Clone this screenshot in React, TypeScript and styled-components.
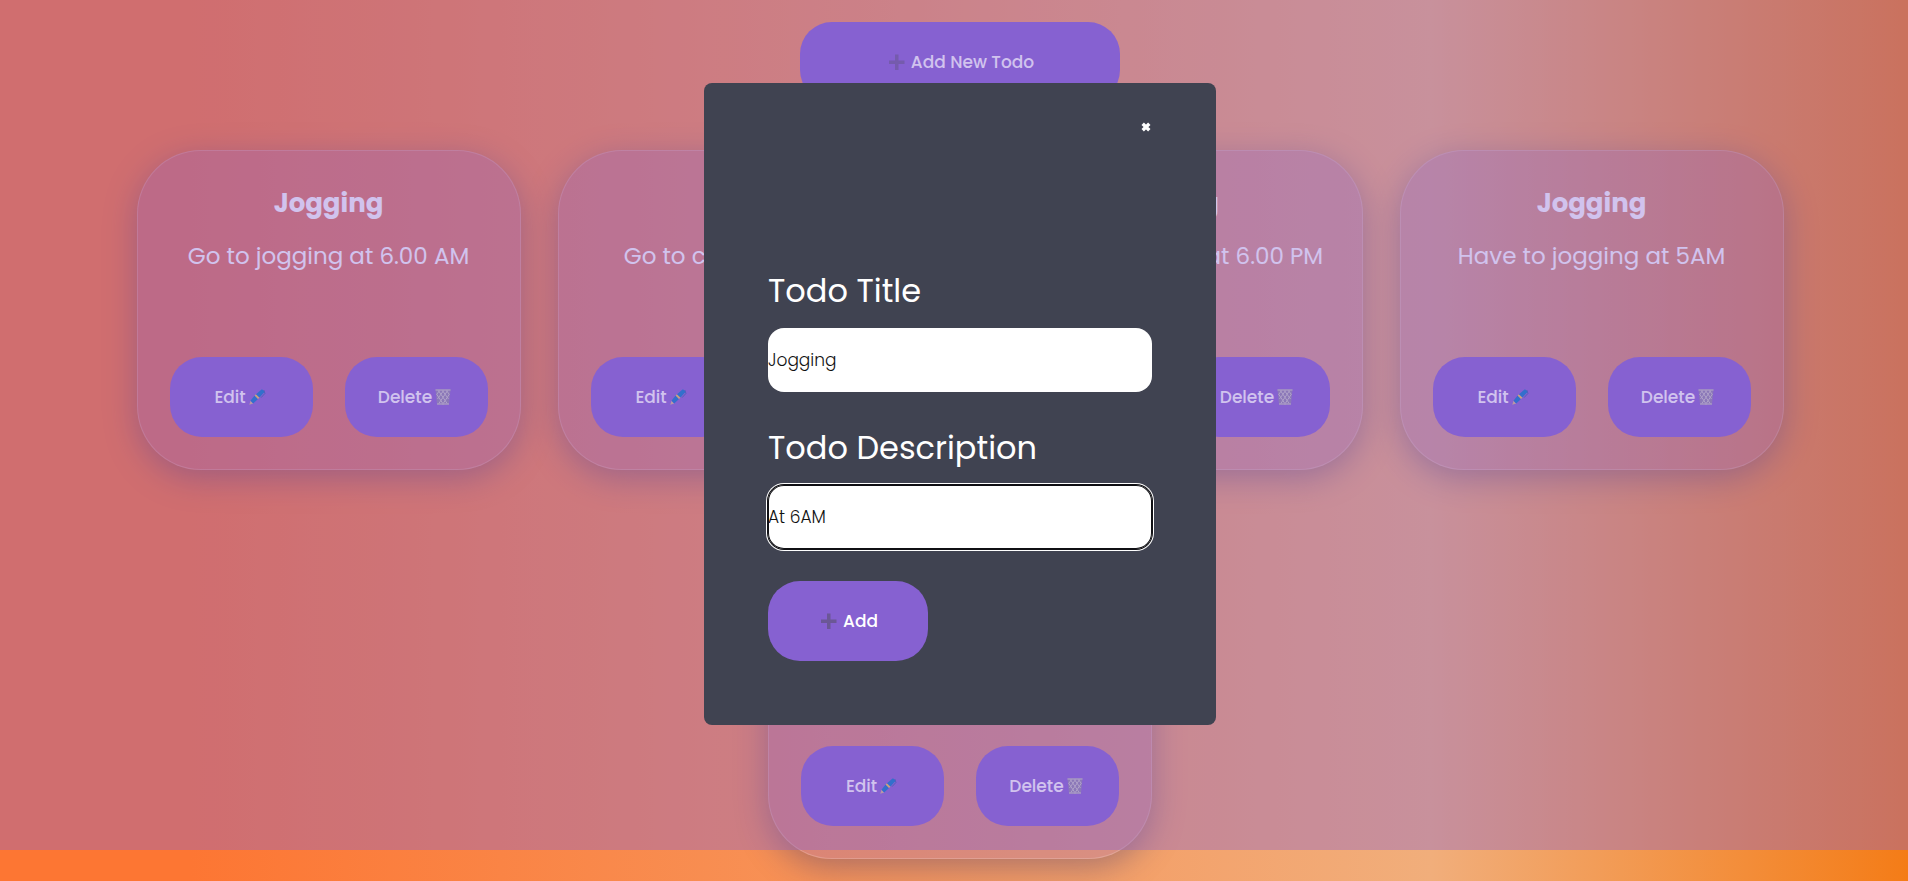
import React, { useState } from "react";
import styled, { createGlobalStyle } from "styled-components";

const GlobalStyle = createGlobalStyle`
  *, *::before, *::after { box-sizing: border-box; margin: 0; padding: 0; }
  body {
    min-height: 100vh;
    overflow: hidden;
    font-family: Poppins, "Open Sans", "Noto Sans", sans-serif;
    background: linear-gradient(90deg, #fd7633 0%, #fd7633 10%, #f1ae7b 75%, #f47c17 100%);
  }
  button, input { font: inherit; border: 0; }
`;

const Page = styled.main`
  height: 100vh;
  padding: 22px 0 0 12px;
  overflow: hidden;
  display: flex;
  flex-direction: column;
  align-items: center;
  gap: 48px;
`;

const Button = styled.button<{ $width: string }>`
  width: ${(p) => p.$width};
  height: 80px;
  flex-shrink: 0;
  display: inline-flex;
  align-items: center;
  justify-content: center;
  gap: 3px;
  border-radius: 32px;
  background: #8661d1;
  color: #fff;
  font-size: 17px;
  line-height: 24px;
  font-weight: 500;
  cursor: pointer;
`;

const Cards = styled.ul`
  list-style: none;
  display: flex;
  flex-wrap: wrap;
  justify-content: center;
  gap: 69px 37px;
`;

const Card = styled.li`
  width: 384px;
  height: 320px;
  padding: 32px;
  display: flex;
  flex-direction: column;
  align-items: center;
  border: 1px solid rgba(255, 255, 255, 0.18);
  border-radius: 64px;
  background: rgba(134, 97, 209, 0.25);
  box-shadow: 0 8px 32px 0 rgba(31, 38, 120, 0.35);
  color: #fff;
`;

const CardTitle = styled.h2`
  font-size: 26px;
  line-height: 40px;
  font-weight: 700;
`;

const CardText = styled.p`
  margin-top: 16px;
  font-size: 23px;
  line-height: 34px;
`;

const CardActions = styled.div`
  width: 100%;
  margin-top: auto;
  display: grid;
  grid-template-columns: 1fr 1fr;
  gap: 32px;
`;

const Overlay = styled.div`
  position: fixed;
  inset: 0 0 31px 0;
  padding: 83px 0 0 12px;
  display: flex;
  justify-content: center;
  align-items: flex-start;
  background: rgba(134, 97, 209, 0.38);
`;

const Dialog = styled.form`
  width: 512px;
  flex-shrink: 0;
  padding: 32px 64px 64px;
  display: flex;
  flex-direction: column;
  align-items: flex-start;
  gap: 32px;
  border-radius: 8px;
  background: #404351;
  color: #fff;
`;

const Close = styled.button`
  width: 12px;
  height: 24px;
  margin-bottom: 96px;
  align-self: flex-end;
  display: flex;
  align-items: center;
  justify-content: center;
  background: none;
  color: #fff;
  cursor: pointer;
`;

const Field = styled.label`
  width: 100%;
  display: flex;
  flex-direction: column;
  gap: 13px;
  font-size: 32px;
  line-height: 48px;
`;

const TextInput = styled.input<{ $active?: boolean }>`
  width: 100%;
  height: 64px;
  border-radius: 16px;
  background: #fff;
  color: #111;
  font-size: 17px;
  line-height: 24px;
  font-weight: 300;
  outline: none;
  box-shadow: ${(p) =>
    p.$active
      ? "inset 0 0 0 1px #101014, 0 0 0 1px #101014, 0 0 0 2px #fff"
      : "none"};
`;

const PlusIcon = () => (
  <svg width="22" height="16" viewBox="0 0 22 16" aria-hidden="true">
    <path d="M9 0.500h3.500v6h6v3.500h-6v6h-3.500v-6h-6v-3.500h6z" fill="#6b5796" />
  </svg>
);

const PenIcon = () => (
  <svg width="19" height="16" viewBox="0 0 19 16" aria-hidden="true">
    <path d="M0.300 15.700L1.500 11.800L4.200 14.400z" fill="#d9b98a" />
    <path d="M1.500 11.800L5.600 6.600L9 9.900L4.200 14.400z" fill="#0078c8" />
    <path d="M5.600 6.600L7 5.200L10.500 8.500L9 9.900z" fill="#f2c94c" />
    <path d="M7 5.200L12.200 0.700C13.500 -0.100 16 1.900 15 3.500L10.500 8.500z" fill="#0078c8" />
    <path d="M15 1.200L15.900 4.500L12 8.700" fill="none" stroke="#1c5fa0" strokeWidth="0.800" />
  </svg>
);

const BinIcon = () => (
  <svg width="19" height="16" viewBox="0 0 19 16" aria-hidden="true">
    <path d="M0.500 0.500h15l-1.500 15h-12z" fill="#8f86a8" />
    <path
      d="M3 1l9.500 14M7 1l6.500 9M1.500 5l7 10.500M13 1L3.500 15M9 1l-6.500 9M14.500 5l-7 10.500M11 1l3 4M5 1l-3 4"
      fill="none"
      stroke="#c9c9c4"
      strokeWidth="1"
    />
    <path d="M0.500 1h15M2 15h12" stroke="#b9b7ba" strokeWidth="1.500" />
  </svg>
);

const CloseIcon = () => (
  <svg width="10" height="10" viewBox="0 0 10 10" aria-hidden="true">
    <path d="M1.700 1.700L8.300 8.300M8.300 1.700L1.700 8.300" stroke="#fff" strokeWidth="3.400" />
  </svg>
);

const todos = [
  { id: 1, title: "Jogging", text: "Go to jogging at 6.00 AM" },
  { id: 2, title: "Class", text: "Go to college at 10 AM" },
  { id: 3, title: "Coding", text: "Have to jogging at 6.00 PM" },
  { id: 4, title: "Jogging", text: "Have to jogging at 5AM" },
  { id: 5, title: "Jogging", text: "At 6AM" },
];

export default function App() {
  const [title, setTitle] = useState("Jogging");
  const [description, setDescription] = useState("At 6AM");

  return (
    <>
      <GlobalStyle />
      <Page>
        <Button type="button" $width="320px">
          <PlusIcon />
          Add New Todo
        </Button>
        <Cards>
          {todos.map((todo) => (
            <Card key={todo.id}>
              <CardTitle>{todo.title}</CardTitle>
              <CardText>{todo.text}</CardText>
              <CardActions>
                <Button type="button" $width="100%">
                  Edit
                  <PenIcon />
                </Button>
                <Button type="button" $width="100%">
                  Delete
                  <BinIcon />
                </Button>
              </CardActions>
            </Card>
          ))}
        </Cards>
      </Page>
      <Overlay>
        <Dialog role="dialog" aria-label="Add todo" onSubmit={(e) => e.preventDefault()}>
          <Close type="button" aria-label="Close">
            <CloseIcon />
          </Close>
          <Field>
            Todo Title
            <TextInput value={title} onChange={(e) => setTitle(e.target.value)} />
          </Field>
          <Field>
            Todo Description
            <TextInput
              $active
              value={description}
              onChange={(e) => setDescription(e.target.value)}
            />
          </Field>
          <Button type="submit" $width="160px">
            <PlusIcon />
            Add
          </Button>
        </Dialog>
      </Overlay>
    </>
  );
}
